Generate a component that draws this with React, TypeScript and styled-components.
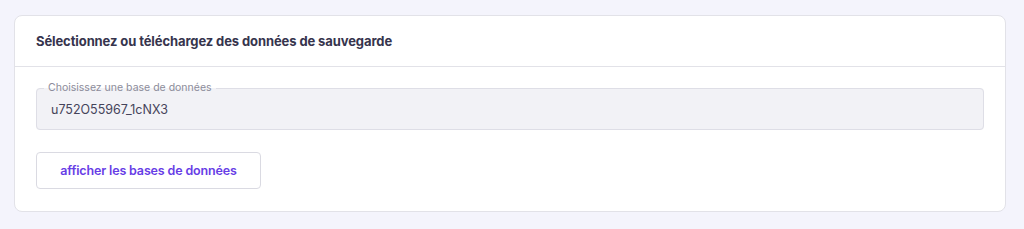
import React from "react";
import styled, { createGlobalStyle } from "styled-components";

const Global = createGlobalStyle`
  html, body { margin: 0; padding: 0; background: #f4f4fc; }
  body { font-family: Inter, "Noto Sans", Arial, sans-serif; -webkit-font-smoothing: antialiased; }
  * { box-sizing: border-box; }
`;

const Page = styled.div`
  padding: 15px 18px 17px 14px;
  background: #f4f4fc;
  min-height: 229px;
`;

const Card = styled.section`
  background: #fff;
  border: 1px solid #e2e2e8;
  border-radius: 8px;
`;

const CardHeader = styled.header`
  height: 51px;
  display: flex;
  align-items: center;
  padding: 0 21px;
  border-bottom: 1px solid #e2e2e8;
`;

const Title = styled.h2`
  margin: 0;
  font-size: 13px;
  font-weight: 700;
  color: #36344d;
  letter-spacing: -0.1px;
`;

const CardBody = styled.div`
  padding: 15px 21px 22px 21px;
  display: flex;
  flex-direction: column;
  align-items: stretch;
  gap: 22px;
`;

const Field = styled.fieldset`
  margin: 0;
  min-width: 0;
  padding: 0 7px;
  border: 1px solid #dedee6;
  border-radius: 4px;
  background: #f2f2f6;
`;

const Legend = styled.legend`
  padding: 0 4px;
  font-size: 10.5px;
  line-height: 12px;
  color: #8c8c9a;
`;

const Value = styled.div`
  padding: 8px 7px 11px;
  font-size: 12.5px;
  line-height: 16px;
  color: #45445a;
`;

const Button = styled.button`
  align-self: flex-start;
  height: 37px;
  width: 225px;
  background: #fff;
  border: 1px solid #dadae2;
  border-radius: 4px;
  font-family: inherit;
  font-size: 12.5px;
  font-weight: 600;
  letter-spacing: -0.15px;
  color: #673de6;
  cursor: pointer;
`;

export default function App() {
  return (
    <>
      <Global />
      <Page>
        <Card>
          <CardHeader>
            <Title>Sélectionnez ou téléchargez des données de sauvegarde</Title>
          </CardHeader>
          <CardBody>
            <Field>
              <Legend>Choisissez une base de données</Legend>
              <Value>u752O55967_1cNX3</Value>
            </Field>
            <Button>afficher les bases de données</Button>
          </CardBody>
        </Card>
      </Page>
    </>
  );
}
